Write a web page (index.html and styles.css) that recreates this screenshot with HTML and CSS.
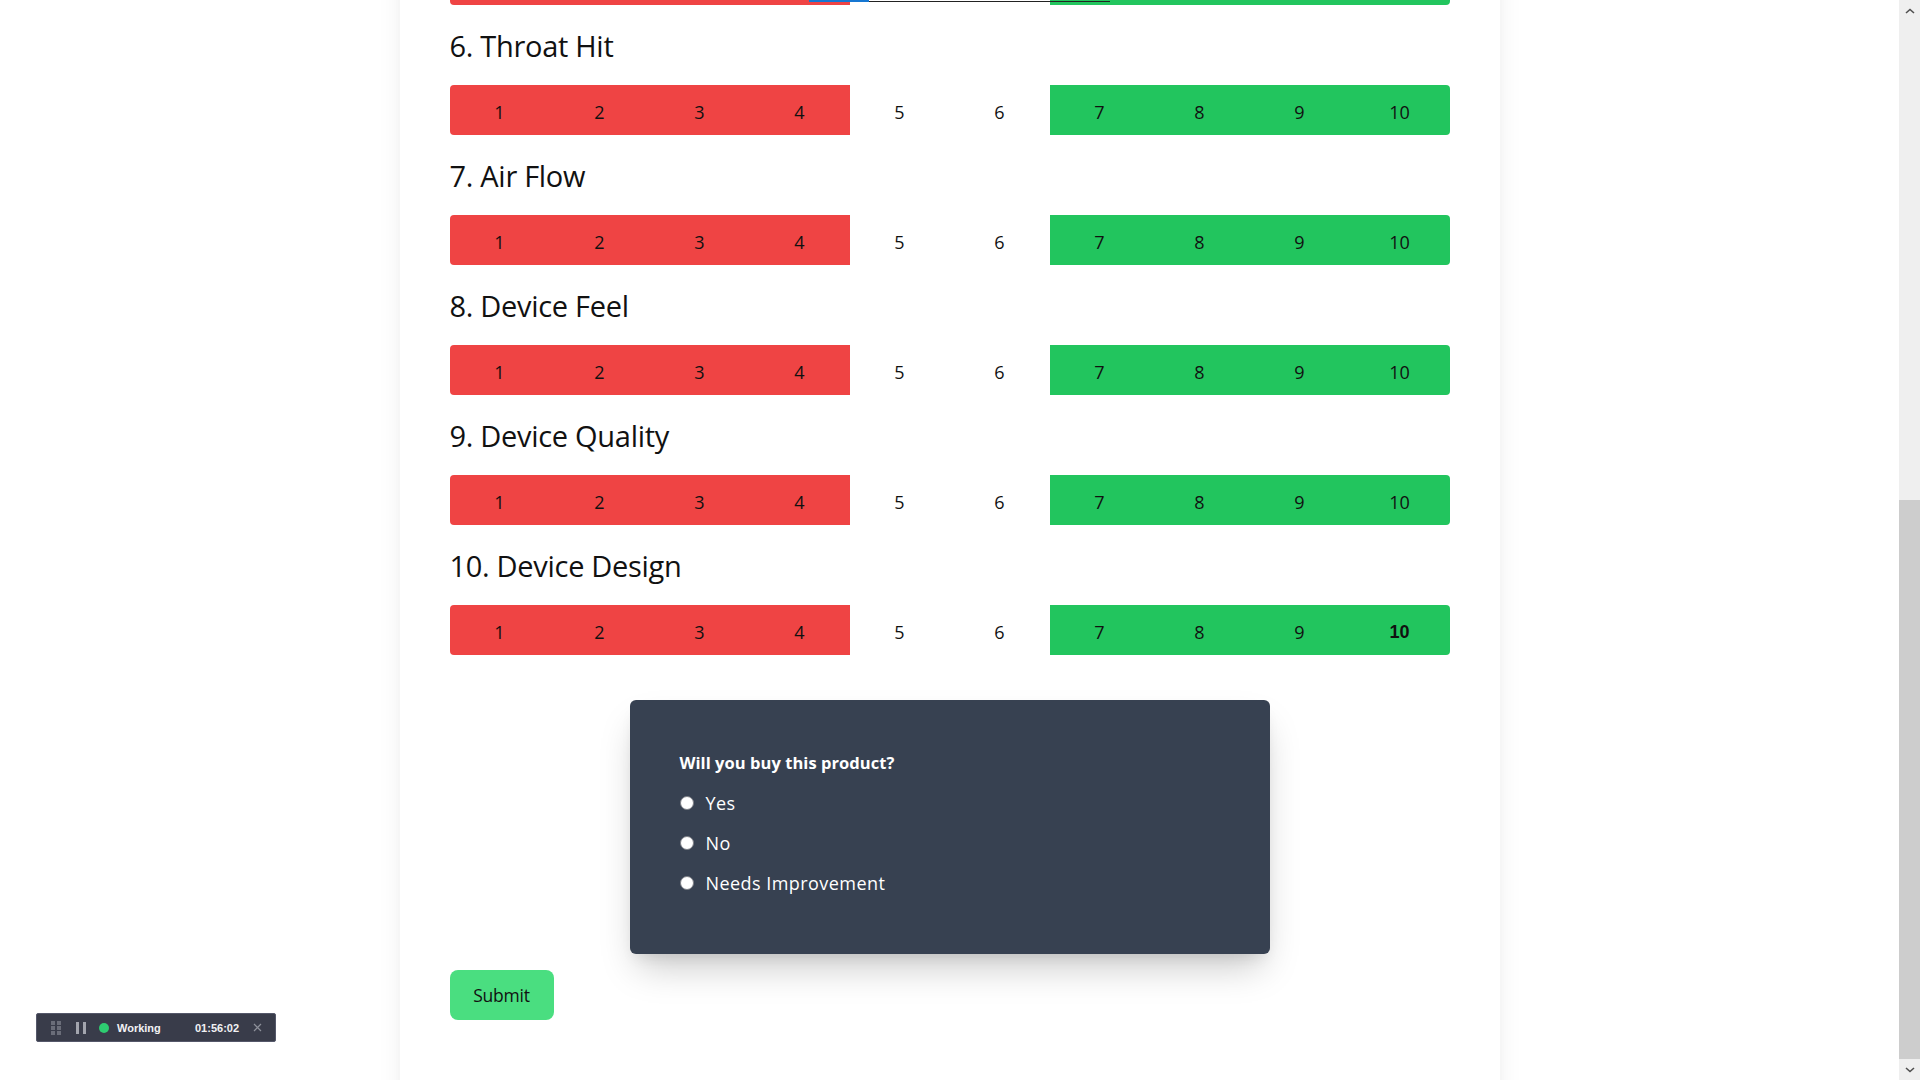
FILE: index.html
```html
<!DOCTYPE html>
<html lang="en">
<head>
<meta charset="utf-8">
<title>Product Rating</title>
<link rel="stylesheet" href="styles.css">
</head>
<body>
<div class="viewport">
  <main class="page">
    <div class="card">
      <div class="scale scale-prev">
        <span class="cell low first"></span><span class="cell low"></span><span class="cell low"></span><span class="cell low"></span><span class="cell"></span><span class="cell"></span><span class="cell high"></span><span class="cell high"></span><span class="cell high"></span><span class="cell high last"></span>
        <span class="focus-line blue"></span><span class="focus-line dark"></span>
      </div>

      <section class="question">
        <h2 class="q-title">6. Throat Hit</h2>
        <div class="scale">
          <span class="cell low first">1</span><span class="cell low">2</span><span class="cell low">3</span><span class="cell low">4</span><span class="cell">5</span><span class="cell">6</span><span class="cell high">7</span><span class="cell high">8</span><span class="cell high">9</span><span class="cell high last">10</span>
        </div>
      </section>

      <section class="question">
        <h2 class="q-title">7. Air Flow</h2>
        <div class="scale">
          <span class="cell low first">1</span><span class="cell low">2</span><span class="cell low">3</span><span class="cell low">4</span><span class="cell">5</span><span class="cell">6</span><span class="cell high">7</span><span class="cell high">8</span><span class="cell high">9</span><span class="cell high last">10</span>
        </div>
      </section>

      <section class="question">
        <h2 class="q-title">8. Device Feel</h2>
        <div class="scale">
          <span class="cell low first">1</span><span class="cell low">2</span><span class="cell low">3</span><span class="cell low">4</span><span class="cell">5</span><span class="cell">6</span><span class="cell high">7</span><span class="cell high">8</span><span class="cell high">9</span><span class="cell high last">10</span>
        </div>
      </section>

      <section class="question">
        <h2 class="q-title">9. Device Quality</h2>
        <div class="scale">
          <span class="cell low first">1</span><span class="cell low">2</span><span class="cell low">3</span><span class="cell low">4</span><span class="cell">5</span><span class="cell">6</span><span class="cell high">7</span><span class="cell high">8</span><span class="cell high">9</span><span class="cell high last">10</span>
        </div>
      </section>

      <section class="question">
        <h2 class="q-title">10. Device Design</h2>
        <div class="scale">
          <span class="cell low first">1</span><span class="cell low">2</span><span class="cell low">3</span><span class="cell low">4</span><span class="cell">5</span><span class="cell">6</span><span class="cell high">7</span><span class="cell high">8</span><span class="cell high">9</span><span class="cell high last selected">10</span>
        </div>
      </section>

      <div class="poll">
        <p class="poll-q">Will you buy this product?</p>
        <label class="opt"><input type="radio" name="buy" class="radio"><span>Yes</span></label>
        <label class="opt"><input type="radio" name="buy" class="radio"><span>No</span></label>
        <label class="opt"><input type="radio" name="buy" class="radio"><span>Needs Improvement</span></label>
      </div>

      <button class="submit" type="button">Submit</button>
    </div>
  </main>

  <div class="scrollbar">
    <div class="sb-arrow">
      <svg width="10" height="6" viewBox="0 0 10 6"><path d="M1 5 L5 1.5 L9 5" fill="none" stroke="#505050" stroke-width="1.6"/></svg>
    </div>
    <div class="sb-track"><div class="sb-thumb"></div></div>
    <div class="sb-arrow">
      <svg width="10" height="6" viewBox="0 0 10 6"><path d="M1 1 L5 4.5 L9 1" fill="none" stroke="#505050" stroke-width="1.6"/></svg>
    </div>
  </div>
</div>

<div class="timer">
  <svg class="t-grip" width="10" height="14" viewBox="0 0 10 14">
    <rect x="0" y="0" width="4" height="4" fill="#6a6d79"/><rect x="6" y="0" width="4" height="4" fill="#6a6d79"/>
    <rect x="0" y="5" width="4" height="4" fill="#6a6d79"/><rect x="6" y="5" width="4" height="4" fill="#6a6d79"/>
    <rect x="0" y="10" width="4" height="4" fill="#6a6d79"/><rect x="6" y="10" width="4" height="4" fill="#6a6d79"/>
  </svg>
  <svg class="t-pause" width="10" height="12" viewBox="0 0 10 12">
    <rect x="0" y="0" width="3" height="12" fill="#a3a5ae"/><rect x="7" y="0" width="3" height="12" fill="#a3a5ae"/>
  </svg>
  <span class="t-dot"></span>
  <span class="t-status">Working</span>
  <span class="t-time">01:56:02</span>
  <svg class="t-close" width="9" height="9" viewBox="0 0 9 9"><path d="M1 1 L8 8 M8 1 L1 8" stroke="#8d909a" stroke-width="1.2"/></svg>
</div>
</body>
</html>
```

FILE: styles.css
```css
* { box-sizing: border-box; }

html, body {
  margin: 0;
  padding: 0;
  height: 1080px;
  overflow: hidden;
  background: #ffffff;
  font-family: "Open Sans", "Noto Sans", sans-serif;
  color: #111;
}

.viewport {
  display: flex;
  width: 1920px;
  height: 1080px;
}

.page {
  flex: 1;
  height: 1080px;
  overflow: hidden;
}

.card {
  width: 1100px;
  margin: -45px auto 0;
  padding: 0 50px 200px;
  background: #fff;
  box-shadow: 0 10px 25px -3px rgba(0,0,0,0.08), 0 4px 10px -4px rgba(0,0,0,0.06);
}

.scale {
  position: relative;
  display: grid;
  grid-template-columns: repeat(10, 100px);
  height: 50px;
}

.scale-prev { margin-bottom: 23px; }

.cell {
  display: flex;
  align-items: center;
  justify-content: center;
  height: 50px;
  padding-top: 4px;
  font-size: 18px;
  color: #111;
}

.cell.low { background: #ef4444; }
.cell.high { background: #22c55e; }
.cell.first { border-radius: 4px 0 0 4px; }
.cell.last { border-radius: 0 4px 4px 0; }
.cell.selected { font-weight: 700; font-family: "Liberation Sans", Arial, sans-serif; }

.focus-line {
  position: absolute;
  bottom: 3px;
  height: 2px;
}
.focus-line.blue { left: 359px; width: 60px; background: #1677d2; }
.focus-line.dark { left: 419px; width: 241px; background: #222; height: 1.5px; }

.question { margin-bottom: 23px; }

.q-title {
  margin: 0 0 21px;
  font-size: 29px;
  line-height: 36px;
  font-weight: 400;
  letter-spacing: -0.3px;
  color: #111;
}

.poll {
  width: 640px;
  margin: 45px auto 0;
  padding: 51px 50px 51px;
  background: #374151;
  border-radius: 6px;
  box-shadow: 0 20px 35px -8px rgba(0,0,0,0.22), 0 8px 14px -6px rgba(0,0,0,0.1);
  color: #fff;
}

.poll-q {
  margin: 0 0 8px;
  font-size: 16.5px;
  line-height: 24px;
  font-weight: 700;
  letter-spacing: 0.05px;
}

.opt {
  display: flex;
  align-items: center;
  height: 40px;
  font-size: 18px;
  letter-spacing: 0.45px;
}

.radio {
  appearance: none;
  -webkit-appearance: none;
  width: 14px;
  height: 14px;
  margin: 0 12px 0 0;
  border-radius: 50%;
  background: #fff;
  border: 1.5px solid #7d7f86;
  flex: none;
}

.submit {
  display: block;
  width: 104px;
  height: 50px;
  margin-top: 16px;
  padding: 0;
  border: none;
  border-radius: 8px;
  background: #4ade80;
  font-family: "Open Sans", "Noto Sans", sans-serif;
  font-size: 17.5px;
  color: #111;
  letter-spacing: -0.2px;
}

.scrollbar {
  width: 21px;
  height: 1080px;
  background: #efefef;
  display: flex;
  flex-direction: column;
}

.sb-arrow {
  height: 21px;
  display: flex;
  align-items: center;
  justify-content: center;
  flex: none;
}

.sb-track {
  flex: 1;
  display: flex;
  flex-direction: column;
  justify-content: flex-end;
}

.sb-thumb {
  height: 559px;
  background: #cdcdcd;
}

.timer {
  position: fixed;
  left: 36px;
  top: 1013px;
  width: 240px;
  height: 29px;
  display: flex;
  align-items: center;
  padding-left: 14px;
  background: #393c4a;
  border: 1px solid #55586a;
  border-radius: 2px;
  font-family: "Liberation Sans", Arial, sans-serif;
  font-size: 11px;
  font-weight: 700;
  color: #f2f2f4;
}

.t-grip { margin-right: 15px; }
.t-pause { margin-right: 13px; }
.t-dot {
  width: 10px;
  height: 10px;
  border-radius: 50%;
  background: #2ecc71;
  margin-right: 8px;
}
.t-status { width: 78px; }
.t-time { margin-right: 14px; }
```
